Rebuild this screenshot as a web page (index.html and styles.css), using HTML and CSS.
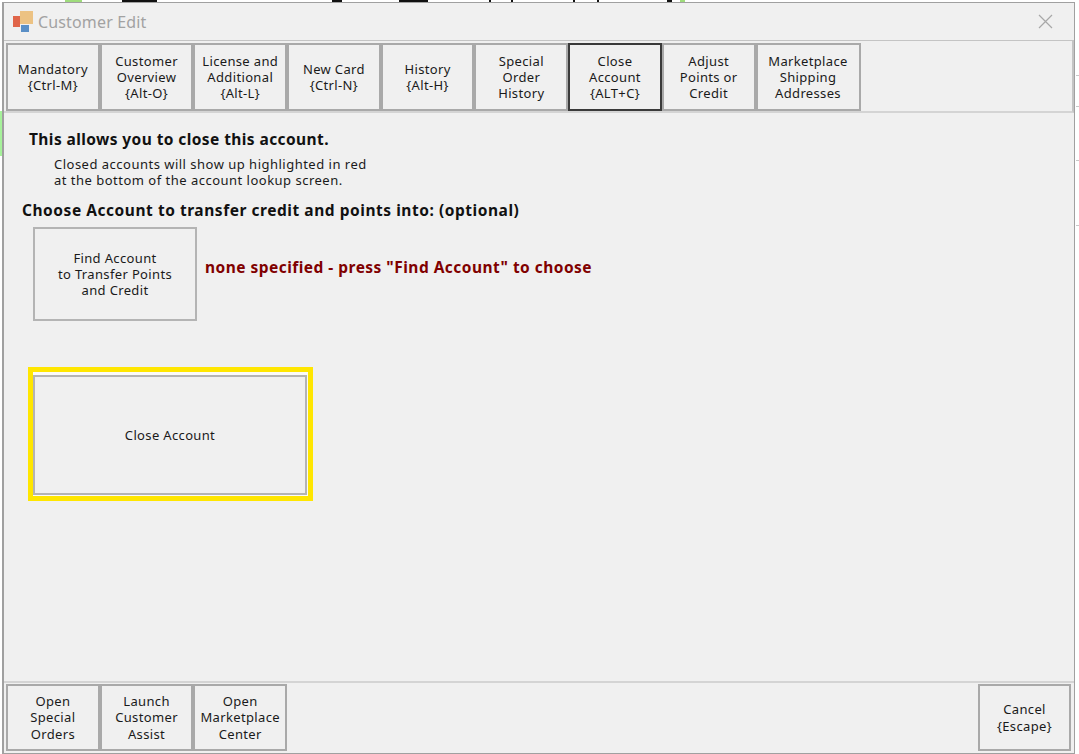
FILE: index.html
```html
<!DOCTYPE html>
<html lang="en">
<head>
<meta charset="utf-8">
<title>Customer Edit</title>
<link rel="stylesheet" href="styles.css">
</head>
<body>
<div class="behind" aria-hidden="true">
  <i class="bit green b1"></i><i class="bit black b2"></i><i class="bit black b3"></i><i class="bit black b4"></i><i class="bit boxed b5"></i><i class="bit boxed b6"></i><i class="bit black b7"></i><i class="bit green b8"></i>
  <i class="bit side s1"></i><i class="bit rule r1"></i><i class="bit rule r2"></i><i class="bit rule r3"></i><i class="bit rule r4"></i>
</div>
<div class="window">
  <header class="titlebar">
    <svg class="logo" width="21" height="21" viewBox="0 0 21 21"><rect x="0" y="5" width="7" height="11" fill="#e0654a"/><rect x="7" y="0" width="13" height="13" fill="#ecc283"/><rect x="8" y="14" width="8" height="7" fill="#5a8fc6"/></svg>
    <span class="title">Customer Edit</span>
    <svg class="close" width="15" height="15" viewBox="0 0 15 15"><path d="M1 1L14 14M14 1L1 14" stroke="#a8a8a8" stroke-width="1.2" fill="none"/></svg>
  </header>
  <nav class="tabs">
    <button class="btn">Mandatory<br>{Ctrl-M}</button>
    <button class="btn">Customer<br>Overview<br>{Alt-O}</button>
    <button class="btn">License and<br>Additional<br>{Alt-L}</button>
    <button class="btn">New Card<br>{Ctrl-N}</button>
    <button class="btn">History<br>{Alt-H}</button>
    <button class="btn">Special<br>Order<br>History</button>
    <button class="btn active">Close<br>Account<br>{ALT+C}</button>
    <button class="btn">Adjust<br>Points or<br>Credit</button>
    <button class="btn wide">Marketplace<br>Shipping<br>Addresses</button>
  </nav>
  <main class="content">
    <h1 class="heading">This allows you to close this account.</h1>
    <p class="note">Closed accounts will show up highlighted in red<br>at the bottom of the account lookup screen.</p>
    <h2 class="subheading">Choose Account to transfer credit and points into: (optional)</h2>
    <div class="find-row">
      <button class="btn find">Find Account<br>to Transfer Points<br>and Credit</button>
      <span class="status">none specified - press "Find Account" to choose</span>
    </div>
    <div class="highlight"><button class="btn close-account">Close Account</button></div>
  </main>
  <footer class="footer">
    <button class="btn">Open<br>Special<br>Orders</button>
    <button class="btn">Launch<br>Customer<br>Assist</button>
    <button class="btn">Open<br>Marketplace<br>Center</button>
    <button class="btn cancel">Cancel<br>{Escape}</button>
  </footer>
</div>
</body>
</html>
```
FILE: styles.css
```css
html, body { margin: 0; height: 100%; background: #fff; overflow: hidden; }
body { padding: 2px 4px 0 2px; box-sizing: border-box; height: 754px; }
.behind { position: absolute; inset: 0; }
.bit { position: absolute; display: block; }
.green { background: #9fdc7c; top: 0; height: 2px; }
.black { background: #111; top: 0; height: 2px; }
.boxed { background: #fff; border: solid #111; border-width: 0 2px; top: 0; height: 2px; }
.b1 { left: 65px; width: 17px; }
.b2 { left: 122px; width: 35px; }
.b3 { left: 332px; width: 10px; }
.b4 { left: 399px; width: 29px; }
.b5 { left: 489px; width: 20px; }
.b6 { left: 573px; width: 22px; }
.b7 { left: 667px; width: 5px; }
.b8 { left: 680px; width: 5px; }
.s1 { left: 0; top: 111px; width: 2px; height: 45px; background: #a6f29a; }
.rule { left: 1076px; width: 3px; height: 1px; background: #c8c8c8; }
.r1 { top: 75px; }
.r2 { top: 106px; }
.r3 { top: 160px; }
.r4 { top: 225px; }
.window {
  position: relative;
  height: 752px; box-sizing: border-box; display: flex; flex-direction: column;
  background: #f0f0f0; border: 1px solid #a0a0a0; border-left-width: 2px;
  font-family: "Noto Sans", sans-serif; font-size: 13px; letter-spacing: .35px; color: #1a1a1a;
}
.titlebar { height: 38px; display: flex; align-items: center; padding: 0 21px 0 9px; border-bottom: 1px solid #c4c4c4; flex: none; box-sizing: border-box; }
.logo { margin-right: 4px; }
.title { font-size: 16px; letter-spacing: .15px; color: #a2a2a2; flex: 1; }
.tabs { display: flex; height: 68px; padding: 2px 0 0 2px; border-bottom: 2px solid #d4d4d4; border-right: 2px solid #c4c4c4; flex: none; align-items: flex-start; }
.btn {
  width: 93.7px; height: 68px; box-sizing: border-box; padding: 0; background: #f0f0f0;
  border: 2px solid #a9a9a9; font: inherit; letter-spacing: inherit; color: inherit; line-height: 16.2px; text-align: center; flex: none;
}
.btn.active { border-color: #3a3a3a; }
.btn.wide { width: 105px; }
.content { flex: 1; padding: 16px 0 0 18px; min-height: 0; }
.heading { margin: 0 0 0 7px; font-size: 15.5px; letter-spacing: .41px; line-height: 20px; font-weight: 700; color: #111; }
.note { margin: 7px 0 0 32px; line-height: 16px; letter-spacing: .49px; }
.subheading { margin: 12px 0 0; font-size: 15.5px; letter-spacing: .54px; line-height: 20px; font-weight: 700; color: #111; }
.find-row { display: flex; align-items: center; margin: 7px 0 0 11px; }
.btn.find { width: 164px; height: 94px; border-color: #b4b4b4; }
.status { margin: 0 0 14px 8px; font-size: 15.5px; letter-spacing: .47px; font-weight: 700; color: #800000; }
.highlight { margin: 46px 0 0 6px; width: 285px; height: 134px; box-sizing: border-box; border: 5px solid #ffe600; background: #fafafa; padding: 3px 1px 0 0; }
.btn.close-account { display: block; width: 274px; height: 120px; border-color: #b4b4b4; }
.footer { display: flex; height: 69px; padding: 1px 3px 0 2px; border-top: 2px solid #d4d4d4; flex: none; align-items: flex-start; }
.footer .btn { height: 67px; }
.footer .btn.cancel { margin-left: auto; width: 93px; }
```
